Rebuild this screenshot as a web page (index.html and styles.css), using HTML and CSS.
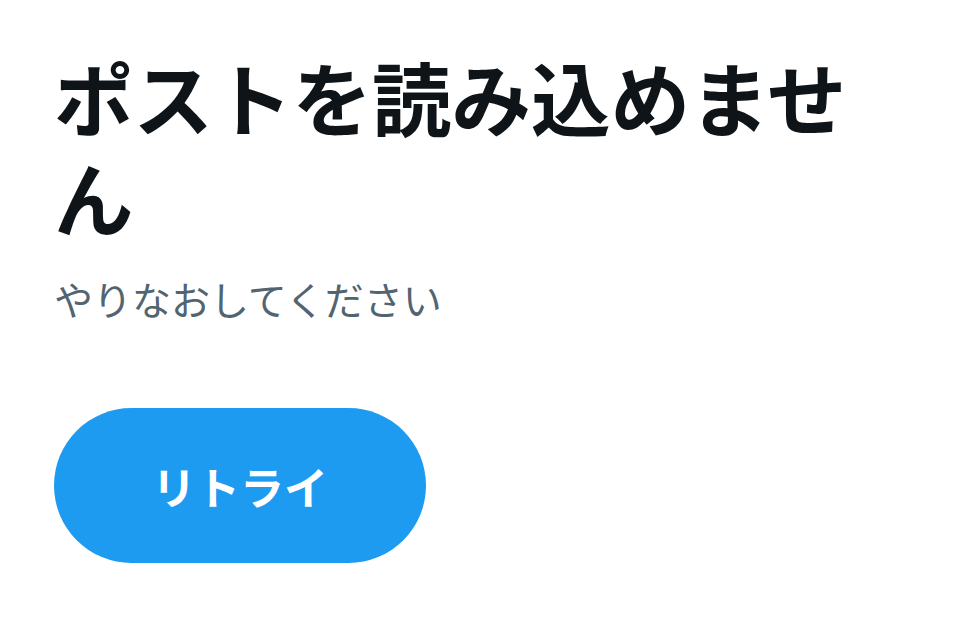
FILE: index.html
```html
<!DOCTYPE html>
<html lang="ja">
<head>
    <meta charset="UTF-8">
    <meta name="viewport" content="width=device-width, initial-scale=1.0">
    <title>ポストを読み込めません</title>
    <link rel="stylesheet" href="styles.css">
</head>
<body>
    <div class="error-panel">
        <h1 class="error-title">ポストを読み込めません</h1>
        <p class="error-text">やりなおしてください</p>
        <button class="retry-btn">リトライ</button>
    </div>
</body>
</html>
```

FILE: styles.css
```css
body {
    margin: 0;
    padding: 0;
    background: #fff;
    font-family: "Noto Sans CJK JP", "Noto Sans", sans-serif;
}
.error-panel {
    display: flex;
    flex-direction: column;
    align-items: flex-start;
    padding: 46px 0 0 54px;
    width: 830px;
}
.error-title {
    margin: 0;
    font-size: 79.5px;
    line-height: 100px;
    font-weight: 700;
    color: #0f1419;
}
.error-text {
    margin: 27px 0 0;
    font-size: 39px;
    line-height: 50px;
    color: #536471;
}
.retry-btn {
    margin-top: 85px;
    width: 372px;
    height: 155px;
    border: none;
    border-radius: 78px;
    background: #1d9bf0;
    color: #fff;
    font-family: inherit;
    font-size: 44px;
    font-weight: 700;
    cursor: pointer;
}
```
